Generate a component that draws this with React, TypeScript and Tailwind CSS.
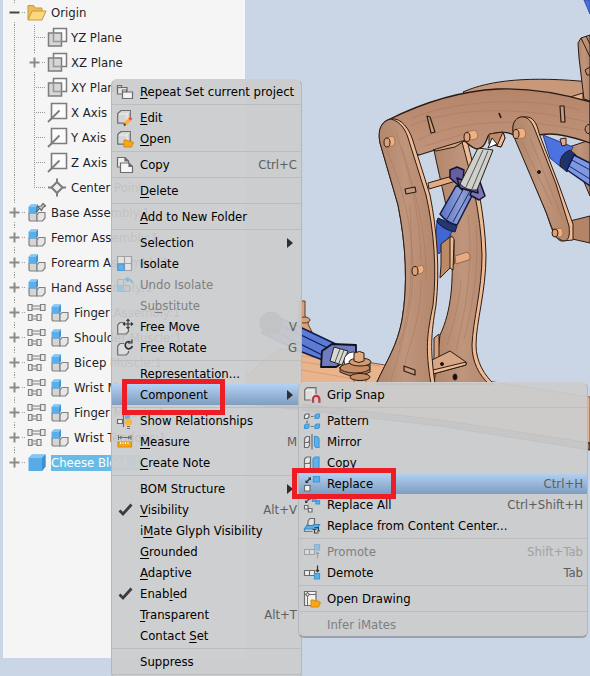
import type { ReactNode } from "react";

type MenuEntry = {
  label: string;
  icon?: ReactNode;
  shortcut?: string;
  disabled?: boolean;
  submenu?: boolean;
  active?: boolean;
  callout?: string;
};

const Icon = ({ children }: { children?: ReactNode }) => (
  <svg
    width="18"
    height="18"
    viewBox="0 0 18 18"
    fill="none"
    stroke="#6c6c6c"
    strokeWidth="1.2"
    className="shrink-0"
    aria-hidden="true"
  >
    {children}
  </svg>
);

const BoxShape = () => (
  <>
    <path d="M1.7 4.5 5 1.500h9.300v9L11 14.200H1.700z" fill="#d6d6d6" />
    <path d="M3 5h8v8M11 5l2.500-2.500" stroke="#eee" strokeWidth="1" />
  </>
);

const OrangeFolder = () => (
  <path d="M8 10h3l1 1.200h4v1.300h1.500l-2 4.500H8z" fill="#f6a81c" stroke="#dd8b00" strokeWidth="1" />
);

const CheckIcon = () => (
  <Icon>
    <path d="M3.500 9.500 7 13 15.500 3.500" stroke="#3c3c3c" strokeWidth="2.800" />
  </Icon>
);

const RepeatIcon = () => (
  <Icon>
    <path d="M1.500 2.500h4v2h5.500v6.500H1.500z" fill="#e4e4e4" />
    <path d="M2 4.500h4" />
    <path d="M6.500 7h4v2h6v6.500h-10z" fill="#f3f3f3" />
    <path d="M6.500 9h4" />
  </Icon>
);

const EditIcon = () => (
  <Icon>
    <BoxShape />
    <path d="m9 15 5-5" stroke="#f7b239" strokeWidth="3.200" />
    <path d="m13.500 10.500 1.800-1.800" stroke="#f0474b" strokeWidth="3" />
    <path d="m8 16.500 1.500-1.500" stroke="#444" strokeWidth="2" />
  </Icon>
);

const OpenIcon = () => (
  <Icon>
    <BoxShape />
    <OrangeFolder />
  </Icon>
);

const CopyIcon = () => (
  <Icon>
    <path d="M1.500 1.500h7.500l3.500 3.500v6h-11z" fill="#eee" />
    <path d="M4.500 7h8.500l3.500 3.500v6h-12z" fill="#f6f6f6" />
    <path d="M9 1.500V5h3.500M13 7v3.500h3.500" fill="#666" />
  </Icon>
);

const IsolateIcon = () => (
  <Icon>
    <path d="M1.500 1.500h14v14h-14z" fill="#e3e3e3" stroke="#a2a2a2" />
    <path d="M8.500 1.500v14M1.500 8.500h14" stroke="#a2a2a2" />
    <path d="M2 9h6v6.500H2z" fill="#64b2ea" stroke="#4a9ad4" />
  </Icon>
);

const UndoIsolateIcon = () => (
  <Icon>
    <path d="M1.500 3.500h6M1.500 3.500v12h12V9M7.500 3.500v12M1.500 9.500h12" stroke="#b5b9bb" />
    <path d="M2 10h5v5H2z" fill="#9cc6e3" stroke="#9cc6e3" />
    <path d="M8 3.500 12.500.500v6z" fill="#86b9da" stroke="none" />
    <path d="M12 3.500q4 0 4.300 4" stroke="#86b9da" strokeWidth="1.800" />
  </Icon>
);

const FreeMoveIcon = () => (
  <Icon>
    <path d="M8 4.500H4L1.700 7v9h8.500l2.300-2.500V11" fill="#ddd" />
    <path
      d="M12 1.500v9M7.500 6h9M10.500 3 12 1.300 13.500 3M10.500 9l1.500 1.700L13.500 9M9 4.500 7.300 6 9 7.500M15 4.500 16.700 6 15 7.500"
      stroke="#333"
      strokeWidth="1.100"
    />
  </Icon>
);

const FreeRotateIcon = () => (
  <Icon>
    <path d="M8 4.500H4L1.700 7v9h8.500l2.300-2.500V12" fill="#ddd" />
    <path d="M14.500 3A3.600 3.600 0 1 0 16.300 7" stroke="#333" strokeWidth="1.700" />
    <path d="M16 .500V4h-4" stroke="#333" />
  </Icon>
);

const RelationsIcon = () => (
  <Icon>
    <path d="M1.500 7.500h5v4h-5z" fill="#eee" />
    <path d="M7.500 3v12" stroke="#e2333a" />
    <path d="M9 3h5v4H9z" fill="#64b2ea" stroke="none" />
    <circle cx="12.500" cy="10" r="3.600" fill="#f9b53c" stroke="none" />
    <path d="M11 14.500h3M11 16.500h3" />
  </Icon>
);

const MeasureIcon = () => (
  <Icon>
    <path d="M2.500 2v5M15 2v5M2.500 4.500H15M5.500 3 3.500 4.500l2 1.500M12 3l2 1.500L12 6" strokeWidth="1" />
    <path d="M2 9h13.500v5H2z" fill="#f4a71b" stroke="#dd8d00" />
    <path d="M4.500 9v2M7 9v2M9.500 9v2M12 9v2" stroke="#fff" strokeWidth="1" />
  </Icon>
);

const GripIcon = () => (
  <Icon>
    <path d="M1.700 4 4 1.700h9V11l-2 3H1.700z" fill="#ddd" stroke="none" />
    <path d="M3 4.500h7V13" stroke="#eee" strokeWidth="1" />
    <path d="M13 8V1.700H4L1.700 4v10h6" />
    <path d="M10 16v-3a3.200 3.200 0 0 1 6.400 0v3" stroke="#cf3040" strokeWidth="2.200" />
    <path d="M9 16.300h2.200M15.200 16.300h2.200" stroke="#777" strokeWidth="1.500" />
  </Icon>
);

const SmallCube = ({ x, y, blue }: { x: number; y: number; blue?: boolean }) => (
  <path
    d={`M${x} ${y + 1.5}l1.500-1.500h3v3l-1.500 1.500h-3z`}
    fill={blue ? "#5aaeea" : "#eee"}
    stroke={blue ? "#3e97d8" : "#666"}
  />
);

const PatternIcon = () => (
  <Icon>
    <SmallCube x={1.5} y={2} />
    <SmallCube x={12} y={2} blue />
    <SmallCube x={1.5} y={12} blue />
    <SmallCube x={12} y={12} blue />
    <path d="M8 4.500h2.500M8 14.500h2.500M4 8.500V11" />
  </Icon>
);

const MirrorIcon = () => (
  <Icon>
    <path d="M1.500 5.500 3.500 3.500h3v9L5 14.500H1.500zM1.500 9.500H5L6.500 8" fill="#e5e5e5" />
    <path d="M9 1v15.500" />
    <path d="M11.500 3.500h2.500l2 2v9h-3l-1.500-2z" fill="#62b1ea" stroke="#3e97d8" />
  </Icon>
);

const SubCopyIcon = () => (
  <Icon>
    <path d="M1.500 5 3.500 3h4v10L6 15H1.500zM1.500 9.500H6L7.500 8" fill="#e5e5e5" />
    <path d="M10 5 12 3h4v10l-1.500 2H10z" fill="#62b1ea" stroke="#3e97d8" />
  </Icon>
);

const ReplaceIcon = () => (
  <Icon>
    <path d="M10.500 1.500h6v5.500h-6z" fill="#5aaeea" stroke="#3e97d8" />
    <path d="M1.500 10.500H7V16H1.500z" fill="#f4f4f4" />
    <path d="M3 7.500 7.500 3" stroke="#333" strokeWidth="1.500" />
    <path d="M5 2.500h3v3zM2.500 5v3h3z" fill="#333" stroke="none" />
  </Icon>
);

const ReplaceAllIcon = () => (
  <Icon>
    <path d="M9.500 2H13v3.500H9.500zM13 4.500h3.500V8H13z" fill="#5aaeea" stroke="#3e97d8" />
    <path d="M1.500 9.500H5V13H1.500zM5.500 12.500H9V16H5.500z" fill="#f4f4f4" />
    <path d="M3 6 6.500 2.500" stroke="#444" />
    <path d="M4.500 1.500h3v3zM2 4v3h3z" fill="#444" stroke="none" />
  </Icon>
);

const ContentCenterIcon = () => (
  <Icon>
    <path d="m1.500 12 3-4.500h12L14 12z" fill="#5aaeea" stroke="#3e87c0" />
    <path d="M1.500 12v2.500h8" stroke="#3e87c0" />
    <path d="m5 4 2-2.500h4.500v5l-1.500 2H5z" fill="#e0e0e0" />
    <path d="M11.500 10.500h4v3M15.500 16h-4v-3.500M9.500 12.500h3.500M14 14h3" stroke="#444" />
  </Icon>
);

const LevelIcon = ({ up }: { up?: boolean }) => (
  <Icon>
    <g opacity={up ? 0.45 : 1}>
      <path d="M1.500 6.500h5v5h-5zM6.500 6.500h5v5h-5z" fill="#f0f0f0" />
      {up ? (
        <>
          <path d="M11.500 1.500H16.500V7h-5z" fill="#5aaeea" stroke="#3e97d8" />
          <path d="M14.500 9.500v6M13 11l1.500-1.700L16 11" />
        </>
      ) : (
        <>
          <path d="M11.500 9.500H16.500V15h-5z" fill="#5aaeea" stroke="#3e97d8" />
          <path d="M14.500 1.500v6M13 6l1.500 1.700L16 6" stroke="#333" />
        </>
      )}
    </g>
  </Icon>
);

const DrawingIcon = () => (
  <Icon>
    <path d="M1.500 1.500h11.500v14H1.500z" fill="#f2f2f2" />
    <path d="M4.500 1.500v14M1.500 4.500H13" strokeWidth="1" />
    <circle cx="4.500" cy="4.500" r="1.500" fill="#fff" />
    <OrangeFolder />
  </Icon>
);

const mainMenu: MenuEntry[][] = [
  [{ label: "&Repeat Set current project", icon: <RepeatIcon /> }],
  [
    { label: "&Edit", icon: <EditIcon /> },
    { label: "&Open", icon: <OpenIcon /> },
  ],
  [{ label: "Copy", icon: <CopyIcon />, shortcut: "Ctrl+C" }],
  [{ label: "&Delete" }],
  [{ label: "&Add to New Folder" }],
  [
    { label: "Selection", submenu: true },
    { label: "Isolate", icon: <IsolateIcon /> },
    { label: "Undo Isolate", icon: <UndoIsolateIcon />, disabled: true },
    { label: "Su&bstitute", disabled: true },
    { label: "Free Move", icon: <FreeMoveIcon />, shortcut: "V" },
    { label: "Free Rotate", icon: <FreeRotateIcon />, shortcut: "G" },
  ],
  [
    { label: "Representation..." },
    {
      label: "Component",
      submenu: true,
      active: true,
      callout: "left-[10px] -top-[5px] h-[36px] w-[103px]",
    },
  ],
  [
    { label: "Show Relationships", icon: <RelationsIcon /> },
    { label: "&Measure", icon: <MeasureIcon />, shortcut: "M" },
    { label: "&Create Note" },
  ],
  [
    { label: "BOM Structure", submenu: true },
    { label: "&Visibility", icon: <CheckIcon />, shortcut: "Alt+V" },
    { label: "i&Mate Glyph Visibility" },
    { label: "&Grounded" },
    { label: "&Adaptive" },
    { label: "Enab&led", icon: <CheckIcon /> },
    { label: "&Transparent", shortcut: "Alt+T" },
    { label: "Contact &Set" },
  ],
  [{ label: "Suppress" }],
  [],
];

const componentMenu: MenuEntry[][] = [
  [{ label: "Grip Snap", icon: <GripIcon /> }],
  [
    { label: "Pattern", icon: <PatternIcon /> },
    { label: "Mirror", icon: <MirrorIcon /> },
    { label: "Copy", icon: <SubCopyIcon /> },
    {
      label: "Replace",
      icon: <ReplaceIcon />,
      shortcut: "Ctrl+H",
      active: true,
      callout: "-left-[7px] -top-[5px] h-[31px] w-[104px]",
    },
    { label: "Replace All", icon: <ReplaceAllIcon />, shortcut: "Ctrl+Shift+H" },
    { label: "Replace from Content Center...", icon: <ContentCenterIcon /> },
  ],
  [
    { label: "Promote", icon: <LevelIcon up />, shortcut: "Shift+Tab", disabled: true },
    { label: "Demote", icon: <LevelIcon />, shortcut: "Tab" },
  ],
  [{ label: "Open Drawing", icon: <DrawingIcon /> }],
  [{ label: "Infer iMates", disabled: true }],
];

// "&" marks the access key, the letter after it is underlined
const MenuLabel = ({ text }: { text: string }) => {
  const at = text.indexOf("&");
  if (at < 0) return <span>{text}</span>;

  return (
    <span>
      {text.slice(0, at)}
      <span className="underline underline-offset-2">{text[at + 1]}</span>
      {text.slice(at + 2)}
    </span>
  );
};

const MenuItem = ({ item }: { item: MenuEntry }) => (
  <li role="none" className="relative">
    <button
      type="button"
      role="menuitem"
      disabled={item.disabled}
      className={`flex h-[21px] w-full items-center gap-[6px] px-1 text-left whitespace-nowrap ${
        item.active ? "bg-linear-to-b from-[#b4d2f3] to-[#7f9dc0]" : ""
      } ${item.disabled ? "text-[#7d7f80]" : "text-black"}`}
    >
      {item.icon ?? <Icon />}
      <MenuLabel text={item.label} />
      {item.shortcut && (
        <span className={`ml-auto ${item.disabled ? "text-[#a0a2a3]" : "text-[#5c5e60]"}`}>
          {item.shortcut}
        </span>
      )}
      {item.submenu && (
        <svg width="6" height="10" viewBox="0 0 6 10" className="mr-1 ml-auto" aria-hidden="true">
          <path d="M0 0 6 5 0 10z" fill="#2e2e2e" />
        </svg>
      )}
    </button>
    {item.callout && (
      <span
        className={`pointer-events-none absolute z-20 border-[5px] border-[#ee1c25] ${item.callout}`}
      />
    )}
  </li>
);

const Menu = ({
  label,
  groups,
  className,
}: {
  label: string;
  groups: MenuEntry[][];
  className: string;
}) => (
  <div
    role="menu"
    aria-label={label}
    className={`absolute rounded-md border border-[#b4b7bb] border-t-[#cfcfcf] bg-[#cbcccd]/94 py-px ${className}`}
  >
    {groups.map((group, i) => (
      <ul
        key={i}
        role="group"
        className={i > 0 ? "mt-[2px] border-t border-[#bbbdbe] pt-[2px]" : ""}
      >
        {group.map((item) => (
          <MenuItem key={item.label} item={item} />
        ))}
      </ul>
    ))}
  </div>
);

const Cubes = ({ pinned }: { pinned?: boolean }) => (
  <svg width="20" height="20" viewBox="0 0 20 20" strokeWidth="1.200" aria-hidden="true">
    <path d="M2 10v7l1 1h7v-8z" fill="#d5d5d5" stroke="#808080" />
    <path d="M10 12 12 9.500h6V15l-2.500 3H10z" fill="#e6e6e6" stroke="#808080" />
    <path d="M1.500 4 4 1.500h7V8l-2 2.500H1.500z" fill="#5aaeea" />
    <path d="M4 1.500h7L9 4H1.500z" fill="#86c6f3" />
    <path d="M11 1.500V8l-2 2.500V4z" fill="#3e95d6" />
    {pinned && (
      <path d="m9 9 3-3M10.500 3.500l4 4 1.500-3 2.500-1.500-2.500-2.500-2 2.500z" fill="#ccc" stroke="#666" />
    )}
  </svg>
);

const JointIcon = () => (
  <svg width="20" height="20" viewBox="0 0 20 20" fill="#ececec" stroke="#808080" strokeWidth="1.200" aria-hidden="true">
    <path d="M1 1.500h4v6H1zM5 3h8.500v3H5zM13.500 1.500h4.500v6h-4.500z" />
    <path d="M1.500 11.500H5v6H1.500zM5 13h5v3H5zM10 11.500h4v6h-4z" />
  </svg>
);

const PlaneIcon = () => (
  <svg width="22" height="22" viewBox="0 0 22 22" fill="none" stroke="#7c7c7c" strokeWidth="1.500" aria-hidden="true">
    <path d="M6.500 1.500h13v13h-13z" fill="#fbfbfb" />
    <path d="M1.500 6h13v13h-13z" fill="#d3d3d3" fillOpacity=".9" />
    <path d="M6.500 6v8.500h8" stroke="#999" />
  </svg>
);

const AxisIcon = () => (
  <svg width="22" height="22" viewBox="0 0 22 22" fill="none" stroke="#7c7c7c" strokeWidth="1.600" aria-hidden="true">
    <path d="M4.500 1.500h15v15h-15z" fill="#fbfbfb" />
    <path d="M1 20 12.500 8.500" strokeWidth="1.800" />
  </svg>
);

const CenterIcon = () => (
  <svg width="22" height="22" viewBox="0 0 22 22" fill="none" stroke="#7c7c7c" strokeWidth="2" aria-hidden="true">
    <path d="m10 5 5.500 5.500L10 16l-5.500-5.500z" fill="#eee" />
    <path d="M10 1.500V6M10 15v4.500M1 10.500h4M15 10.500h4" />
  </svg>
);

const FolderIcon = () => (
  <svg width="20" height="20" viewBox="0 0 20 20" stroke="#c79a3c" strokeWidth="1" aria-hidden="true">
    <path d="M1 17V2.500h5.500L8.500 5H15v3" fill="#e9be5d" />
    <path d="M1 17 5 8h14l-4 9z" fill="#fad77c" />
  </svg>
);

const BlockIcon = () => (
  <svg width="20" height="20" viewBox="0 0 20 20" aria-hidden="true">
    <path d="M1.500 5 5 1.500h13.500v12L15 18H1.500z" fill="#56abe8" />
    <path d="M5 1.500h13.500L15 5H1.500z" fill="#84c5f2" />
    <path d="M18.500 1.500v12L15 18V5z" fill="#3b90d0" />
  </svg>
);

type Toggle = "plus" | "minus" | "none";

// 24px of dotted guide with the expander on its node
const Guide = ({ toggle, end }: { toggle: Toggle; end?: boolean }) => (
  <svg width="24" height="25" viewBox="0 0 24 25" fill="none" className="shrink-0" aria-hidden="true">
    <path d={end ? "M11.500 0v13" : "M11.500 0v25"} stroke="#999" strokeDasharray="1 1" />
    <path d="M13 12.500h9" stroke="#999" strokeDasharray="1 1" />
    {toggle !== "none" && (
      <>
        <path d="M5 4h14v17H5z" fill="#f5f5f5" />
        <path
          d={toggle === "plus" ? "M6.500 12.500h10M11.500 7.500v10" : "M6.500 12.500h10"}
          stroke={toggle === "plus" ? "#8b8b8b" : "#444"}
          strokeWidth="2"
        />
      </>
    )}
  </svg>
);

const originItems: { label: string; icon: ReactNode; toggle: Toggle }[] = [
  { label: "YZ Plane", icon: <PlaneIcon />, toggle: "none" },
  { label: "XZ Plane", icon: <PlaneIcon />, toggle: "plus" },
  { label: "XY Plane", icon: <PlaneIcon />, toggle: "none" },
  { label: "X Axis", icon: <AxisIcon />, toggle: "none" },
  { label: "Y Axis", icon: <AxisIcon />, toggle: "none" },
  { label: "Z Axis", icon: <AxisIcon />, toggle: "none" },
  { label: "Center Point", icon: <CenterIcon />, toggle: "none" },
];

const assemblies = [
  { label: "Base Assembly:1", pinned: true },
  { label: "Femor Assembly:1" },
  { label: "Forearm Assembly:1" },
  { label: "Hand Assembly:1" },
  { label: "Finger Assembly:1", joint: true },
  { label: "Shoulder Muscle:1", joint: true },
  { label: "Bicep Muscle:1", joint: true },
  { label: "Wrist Muscle:1", joint: true },
  { label: "Finger Muscle:1", joint: true },
  { label: "Wrist Tendons:1", joint: true },
];

const ModelTree = () => (
  <ul className="text-[#1e1e28]">
    <li>
      <div className="flex h-[25px] items-center">
        <Guide toggle="minus" />
        <FolderIcon />
        <span className="ml-1">Origin</span>
      </div>
      <ul>
        {originItems.map((item, i) => (
          <li key={item.label} className="flex h-[25px] items-center">
            <svg width="20" height="25" viewBox="0 0 20 25" className="shrink-0" aria-hidden="true">
              <path d="M11.500 0v25" stroke="#999" strokeDasharray="1 1" />
            </svg>
            <Guide toggle={item.toggle} end={i === originItems.length - 1} />
            {item.icon}
            <span className="ml-[2px]">{item.label}</span>
          </li>
        ))}
      </ul>
    </li>
    {assemblies.map((item) => (
      <li key={item.label} className="flex h-[25px] items-center">
        <Guide toggle="plus" />
        {item.joint && (
          <span className="mr-[3px]">
            <JointIcon />
          </span>
        )}
        <Cubes pinned={item.pinned} />
        <span className="ml-1">{item.label}</span>
      </li>
    ))}
    <li className="flex h-[25px] items-center">
      <Guide toggle="plus" end />
      <BlockIcon />
      <span className="ml-1 bg-[#66bce6] text-white">Cheese Block:1</span>
    </li>
  </ul>
);

const RobotArm = () => (
  <svg
    viewBox="245 0 345 676"
    preserveAspectRatio="xMinYMin meet"
    className="w-full"
    fill="none"
    stroke="#2b1c14"
    strokeWidth="1"
    strokeLinejoin="round"
    role="img"
    aria-label="Wooden robot arm assembly"
  >
    <defs>
      <linearGradient id="wood" x1="0" y1="0" x2="1" y2="0">
        <stop offset="0" stopColor="#b1866b" />
        <stop offset=".5" stopColor="#bf957b" />
        <stop offset="1" stopColor="#b3876c" />
      </linearGradient>
      <linearGradient id="beam" x1="0" y1="0" x2="0" y2="1">
        <stop offset="0" stopColor="#b5856a" />
        <stop offset="1" stopColor="#c1957b" />
      </linearGradient>
      <linearGradient id="tube" x1="0" y1="0" x2="1" y2="0">
        <stop offset="0" stopColor="#5a73c0" />
        <stop offset=".6" stopColor="#8f9fd6" />
        <stop offset="1" stopColor="#6478bd" />
      </linearGradient>
    </defs>

    {/* base board */}
    <path d="M230 390 278 349 302 352 590 397V443L440 420 230 396z" fill="#e8b48d" stroke="#7a5844" />
    <path d="M302 362 372 372M302 370 360 380M302 356 380 366" stroke="#c48f6b" strokeOpacity=".6" />
    <path d="M230 396 440 420 590 443V450L440 426 230 402z" fill="#8e6a53" />

    {/* top right post, right rear leg and rear beam */}
    <path d="M584 0H590V14z" fill="#4a6fd8" stroke="#3355b8" />
    <path d="M569 147 590 140V196z" fill="url(#wood)" />
    <path d="M463 92C490 80 530 76 590 82V100H470z" fill="#c8987a" />
    <path d="M590 35 581 38 578 43 579 58 584 99 590 101z" fill="url(#wood)" />
    <path d="M581 38 590 57M586 36 590 44M590 67 585 70 587 75H590" />
    <path d="M570 97 583 93V99" fill="#e9b58d" />

    {/* rear leg */}
    <path
      d="M434 150 466 140C473 170 484 210 485 255 485 290 474 320 474 345 474 362 484 376 492 384H434L440 335C452 310 453 280 452 250 450 215 441 185 434 150z"
      fill="url(#wood)"
    />
    <path d="M468 215C473 260 468 300 456 350M476 225C479 265 474 300 464 340M461 280C459 305 452 330 447 345" stroke="#9f7058" strokeOpacity=".4" />
    <path
      d="M462 142 467 140C475 172 485 212 486 255 486 292 476 322 476 345 476 362 485 376 494 384H489C479 375 472 362 472 345 473 320 482 290 482 255 481 212 470 172 462 142z"
      fill="#efbb94"
    />
    <path d="M428 183 456 175V181L429 189z" fill="#e5aa80" />
    <path d="M434 366V338L439 334V362" fill="#d9a07a" />
    <path d="M432 373V360L450 351 466 362V365L433 374z" fill="#d6a686" />
    <path d="M433 370 466 362V365L433 374z" fill="#efbb94" />
    <ellipse cx="455" cy="377" rx="2" ry="3" fill="#111" />
    <circle cx="442" cy="364" r="1.500" fill="#111" />

    {/* shoulder muscle */}
    <path d="M437 220 453 230 439 254 435 250z" fill="#4168d2" stroke="#2a3f86" />
    <path d="M438 218 457 226 455 232Q444 230 437 222z" fill="#26376f" stroke="#111a3c" />
    <path d="M440 214 456 186 475 190 457 225Q447 223 440 214z" fill="url(#tube)" stroke="#101a48" strokeWidth="1.500" />
    <path d="M447 219 464 188M453 222 470 191" stroke="#1c2a66" />
    <path d="M450 170 457 167 464 170 462 190 457 184 450 178z" fill="#655f9e" stroke="#12122e" strokeWidth="1.500" />
    <path d="M475 184 480 182 485 196 479 200 470 195z" fill="#7e75b3" stroke="#12122e" strokeWidth="1.500" />
    <path d="M457 178 477 186 478 193 460 188z" fill="#5d6cba" stroke="#12122e" strokeWidth="1.500" />
    <path d="M460 184 478 148 493 150 477 190Q467 191 460 184z" fill="#cfcfcb" />
    <path d="M466 187 483 150M472 189 488 151" stroke="#555" />
    <path d="M441 265V244L450 237 454 240V264L440 278z" fill="#bd8a68" />
    <path d="M450 237Q454 236 454 240L453 270 450 268z" fill="#efbb94" />
    <path d="M455 256 467 252Q472 255 469 260L456 264z" fill="#e8aa80" stroke="#94664c" />

    {/* upper beam */}
    <path
      d="M388 120C420 104 458 91 498 89 530 88 560 93 590 102V143C578 139 565 134 550 134 536 134 528 138 516 137 510 130 494 132 488 136 486 142 484 148 477 149 471 148 468 143 464 141L419 155 400 150z"
      fill="url(#beam)"
      strokeWidth="1.300"
    />
    <path
      d="M412 118C460 99 530 97 580 110M410 126C450 109 510 104 588 122M418 140C455 122 510 116 580 130M425 146 470 132"
      stroke="#a4745a"
      strokeOpacity=".45"
    />
    <path d="M433 150 466 140 455 147 436 151z" fill="#dca47e" />
    <path d="M489 134 503 132 505 138 501 147 489 144z" fill="#c08a68" />
    <path d="M503 132 505 138 501 147 497 146z" fill="#efbb94" />
    <path d="M488 148 492 138 497 144z" fill="#fff" />
    <path d="m427 116 3 1 5 15-4 1zM560 106l4 0 1 16-4 0z" fill="#cb9c7d" strokeWidth="1.200" />
    <path d="m499 113 2 5" strokeWidth="1.700" />
    <path d="M466 132 475 130Q480 135 476 139L466 141z" fill="#efb084" stroke="#a87353" />
    <ellipse cx="467" cy="137" rx="3" ry="4.500" fill="#dca179" />
    <path d="M590 124Q585 125 585 130 586 134 590 134" />

    {/* front leg */}
    <path
      d="M395 119C405 121 411 134 413 141L430 195C437 230 440 270 436 305 431 335 430 348 435 384H376C388 358 397 346 402 320 408 285 406 245 398 205L380 143C377 126 384 118 395 119z"
      fill="#efbb94"
    />
    <path
      d="M391 119C401 122 406 130 409 141L426 195C434 230 437 270 433 305 427 335 425 348 431 384H376C388 358 397 346 402 320 408 285 406 245 398 205L380 143C377 129 382 121 391 119z"
      fill="url(#wood)"
    />
    <path
      d="M387 150C399 180 412 215 413 270 412 320 398 352 391 381M396 132C408 170 420 210 421 262M421 280C421 320 407 352 405 364M402 148C415 190 427 235 426 280M410 205C413 260 412 310 399 345"
      stroke="#9f7058"
      strokeOpacity=".4"
    />
    <path d="M386 138 393 136Q397 142 393 146L386 147z" fill="#efb084" stroke="#a87353" />
    <ellipse cx="387" cy="142.500" rx="3" ry="4.500" fill="#dca179" />
    <path d="M414 268 422 265Q426 270 422 273L415 275z" fill="#efb084" stroke="#a87353" />
    <ellipse cx="415" cy="271" rx="3" ry="4.500" fill="#dca179" />
    <path d="m405 189 10-2 1 5-10 2zM404 366l11 4 0 5-11-4z" fill="#c39a7e" strokeWidth="1.200" />

    {/* right muscle */}
    <path d="M543 135 573 147 562 168 550 158z" fill="#4b72df" stroke="#2a3f86" />
    <path d="M570 150 576 155 567 172 560 166Q559 154 570 150z" fill="#1f3270" />
    <path d="M574 155 590 163V186L567 170z" fill="#7e97e2" stroke="#101a48" strokeWidth="1.500" />
    <path d="M572 160 590 170M569 166 590 179" stroke="#1c2a66" />
    <path d="M560 139 566 138 566 145 562 146z" fill="#e8ad84" />

    {/* middle leg and elbow link */}
    <path d="M566 222 590 216V243L568 238z" fill="#b38468" />
    <path d="M525 117C533 116 537 124 539 133L560 188 573 224V240L561 241C553 238 551 225 546 212L514 135C510 122 518 116 525 117z" fill="#efbb94" />
    <path d="M524 117C530 118 533 125 535 130L556 184 569 226C570 236 569 241 563 241 554 238 551 225 546 212L514 137C510 122 517 116 524 117z" fill="url(#wood)" />
    <path d="M522 142 552 205M530 138 563 220" stroke="#9f7058" strokeOpacity=".45" />
    <path d="M516 129 523 128Q528 133 524 138L515 139z" fill="#efb084" stroke="#a87353" />
    <ellipse cx="516" cy="134" rx="3" ry="4.500" fill="#dca179" />
    <circle cx="539" cy="172" r="1.500" fill="#111" />
    <path d="M554 229 561 228Q565 233 561 237L555 237z" fill="#efb084" stroke="#a87353" />
    <ellipse cx="555" cy="233" rx="3" ry="4" fill="#dca179" />

    {/* lower muscle and its knob */}
    <path d="M299 301H305V316L309 320 308 324 312 332 299 328z" fill="#d9a27a" stroke="#5a3d2a" />
    <ellipse cx="304" cy="320" rx="6" ry="3" fill="#d9a27a" stroke="#5a3d2a" />
    <path d="M268 313 302 328 342 347 333 364 302 352 262 333z" fill="#5c7bd5" stroke="#101a48" strokeWidth="1.500" />
    <path d="M268 319 334 351M265 326 328 358" stroke="#121d52" strokeWidth="1.300" />
    <circle cx="271" cy="323" r="11" fill="#333" />
    <path d="m322 351 10-7 24 1 0 8-20 14-15 0z" fill="#6f7cc0" stroke="#10101e" strokeWidth="1.800" />
    <path d="m334 347 14 4-6 14-12-4z" fill="#d8d8d2" stroke="#222" />
    <path d="m340 349-5 13M344 350l-5 13" stroke="#555" />
    <circle cx="353" cy="361" r="9" fill="#fff" stroke="#333" />
    <path d="M354 377H366V390H354z" fill="#e8b089" stroke="#94664c" />
    <path d="M340 367V372Q355 380 370 372V362z" fill="#bb8560" />
    <ellipse cx="355" cy="368" rx="15" ry="5" fill="#c68d65" />
    <ellipse cx="360" cy="362" rx="11" ry="4" fill="#d39a74" />
    <ellipse cx="360" cy="377" rx="10" ry="3.500" fill="#c68d65" />
    <path d="M354 353Q360 350 364 353V361Q359 364 354 361z" fill="#e3ab82" />
  </svg>
);

const App = () => {
  return (
    <div className="relative flex h-screen overflow-hidden bg-[#cad5e5] pl-[3px] font-['DejaVu_Sans_Condensed','DejaVu_Sans',sans-serif] text-[13px] leading-4">
      <aside className="mb-[18px] w-[242px] shrink-0 overflow-hidden bg-[#f5f5f5] whitespace-nowrap">
        <ModelTree />
      </aside>
      <main className="min-w-0 flex-1">
        <RobotArm />
      </main>

      <Menu label="Browser menu" groups={mainMenu} className="top-[79px] left-[111px] w-[191px]" />
      <Menu
        label="Component"
        groups={componentMenu}
        className="top-[382px] left-[298px] w-[290px] border-b-2 border-b-[#9aa1aa]"
      />
    </div>
  );
};

export default App;
